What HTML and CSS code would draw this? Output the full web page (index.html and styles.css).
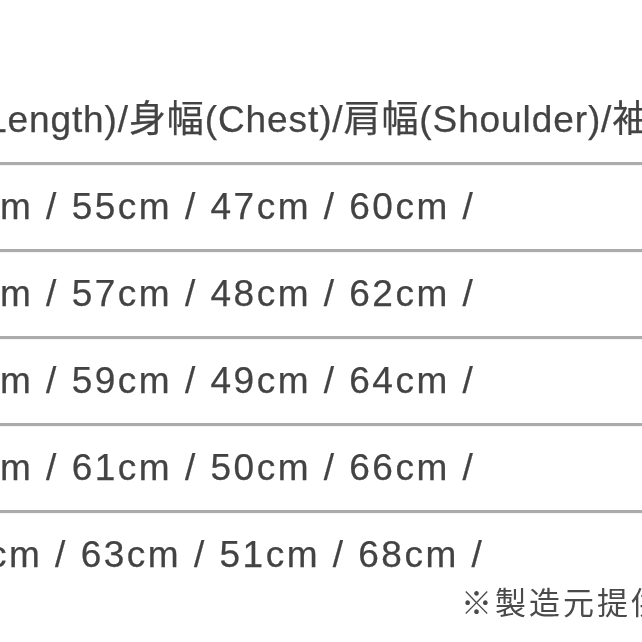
FILE: index.html
```html
<!DOCTYPE html>
<html lang="ja">
<head>
<meta charset="utf-8">
<title>サイズ表</title>
<link rel="stylesheet" href="styles.css">
</head>
<body>
<main class="sheet">
  <div class="size-table">
    <div class="row row-head"><span class="cell cell-head">Length)/身幅(Chest)/肩幅(Shoulder)/袖丈(Sleeve)</span></div>
    <div class="row"><span class="cell">cm / 55cm / 47cm / 60cm /</span></div>
    <div class="row"><span class="cell">cm / 57cm / 48cm / 62cm /</span></div>
    <div class="row"><span class="cell">cm / 59cm / 49cm / 64cm /</span></div>
    <div class="row"><span class="cell">cm / 61cm / 50cm / 66cm /</span></div>
    <div class="row row-last"><span class="cell cell-shift">cm / 63cm / 51cm / 68cm /</span></div>
  </div>
  <p class="note">※製造元提供</p>
</main>
</body>
</html>
```

FILE: styles.css
```css
html, body {
  margin: 0;
  padding: 0;
  background: #ffffff;
}

body {
  width: 642px;
  height: 642px;
  overflow: hidden;
  font-family: "Liberation Sans", "Noto Sans CJK JP", sans-serif;
  color: #434343;
}

.sheet {
  filter: blur(0.45px);
}

.size-table {
  margin-top: 78px;
  display: flex;
  flex-direction: column;
}

.row {
  padding: 25px 0;
  line-height: 34px;
  font-size: 37px;
  white-space: nowrap;
  border-bottom: 3px solid #ababab;
  box-shadow: 0 1px 1px rgba(0, 0, 0, 0.04);
  -webkit-text-stroke: 0.25px #434343;
}

.row-last {
  border-bottom: none;
  box-shadow: none;
  padding-bottom: 4px;
}

.cell {
  display: block;
  margin-left: -21px;
  letter-spacing: 2.5px;
}

.cell-head {
  margin-left: -14px;
  letter-spacing: 0.9px;
}

.cell-shift {
  margin-left: -12px;
}

.note {
  margin: 0 0 0 461px;
  font-size: 31px;
  line-height: 50px;
  letter-spacing: 3px;
  white-space: nowrap;
  font-family: "Noto Sans CJK JP", sans-serif;
  color: #4a4a4a;
}
```
